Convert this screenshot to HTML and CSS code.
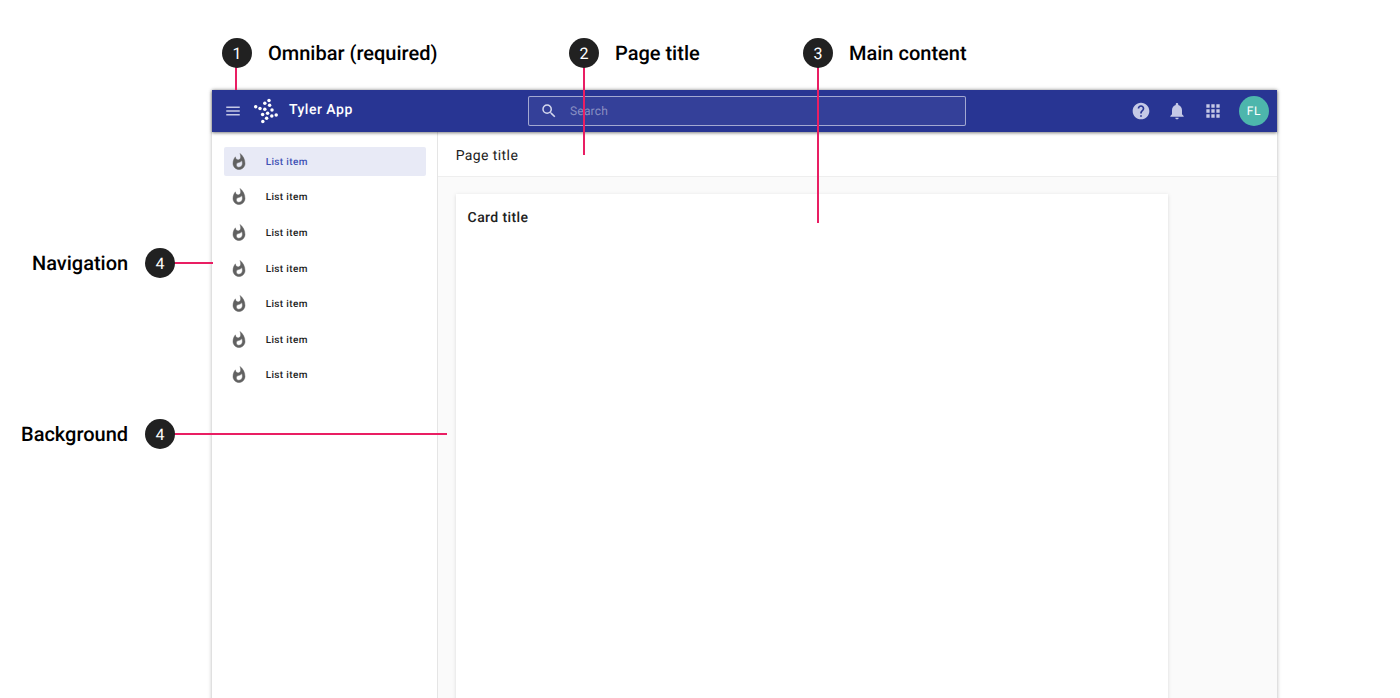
FILE: index.html
```html
<!DOCTYPE html>
<html lang="en">
<head>
<meta charset="utf-8">
<title>Tyler App layout</title>
<link rel="stylesheet" href="styles.css">
</head>
<body>
<div class="canvas">
  <div class="app">
    <header class="omnibar">
      <svg class="menu" viewBox="0 0 24 24" width="24" height="24"><path d="M3 18h18v-2H3v2zm0-5h18v-2H3v2zm0-7v2h18V6H3z"/></svg>
      <svg class="logo" viewBox="0 0 26 26" width="26" height="26">
        <g fill="#fff">
          <circle cx="16" cy="2.4" r="1.75"/><circle cx="11.8" cy="5.2" r="1.75"/><circle cx="16.6" cy="7.2" r="1.75"/><circle cx="2.7" cy="8.8" r="1.75"/><circle cx="7" cy="10.4" r="1.75"/><circle cx="11.8" cy="11.2" r="1.75"/><circle cx="19" cy="12" r="1.75"/><circle cx="14.6" cy="15.2" r="1.75"/><circle cx="9.6" cy="16.4" r="1.75"/><circle cx="23.2" cy="17" r="1.75"/><circle cx="18.8" cy="18" r="1.75"/><circle cx="13.6" cy="20.2" r="1.75"/><circle cx="9.8" cy="23.6" r="1.75"/>
        </g>
      </svg>
      <span class="app-name">Tyler App</span>
      <div class="search">
        <svg viewBox="0 0 24 24" width="18" height="18"><path d="M15.5 14h-.79l-.28-.27A6.47 6.47 0 0 0 16 9.5 6.5 6.5 0 1 0 9.5 16c1.61 0 3.09-.59 4.23-1.57l.27.28v.79l5 4.99L20.49 19l-4.99-5zm-6 0C7.01 14 5 11.99 5 9.5S7.01 5 9.5 5 14 7.01 14 9.5 11.99 14 9.5 14z"/></svg>
        <span>Search</span>
      </div>
      <div class="actions">
        <svg viewBox="0 0 24 24" width="20" height="20"><path d="M12 2C6.48 2 2 6.48 2 12s4.48 10 10 10 10-4.48 10-10S17.52 2 12 2zm1 17h-2v-2h2v2zm2.07-7.75l-.9.92C13.45 12.9 13 13.5 13 15h-2v-.5c0-1.1.45-2.1 1.17-2.83l1.24-1.26c.37-.36.59-.86.59-1.41 0-1.1-.9-2-2-2s-2 .9-2 2H8c0-2.21 1.79-4 4-4s4 1.79 4 4c0 .88-.36 1.68-.93 2.25z"/></svg>
        <svg viewBox="0 0 24 24" width="20" height="20"><path d="M12 22c1.1 0 2-.9 2-2h-4c0 1.1.89 2 2 2zm6-6v-5c0-3.07-1.64-5.64-4.5-6.32V4c0-.83-.67-1.5-1.5-1.5s-1.5.67-1.5 1.5v.68C7.63 5.36 6 7.92 6 11v5l-2 2v1h16v-1l-2-2z"/></svg>
        <svg viewBox="0 0 24 24" width="20" height="20"><path d="M4 8h4V4H4v4zm6 12h4v-4h-4v4zm-6 0h4v-4H4v4zm0-6h4v-4H4v4zm6 0h4v-4h-4v4zm6-10v4h4V4h-4zm-6 4h4V4h-4v4zm6 6h4v-4h-4v4zm0 6h4v-4h-4v4z"/></svg>
        <div class="avatar">FL</div>
      </div>
    </header>
    <div class="body">
      <nav class="nav">
        <a class="item active"><svg viewBox="0 0 24 24" width="18" height="18"><path d="M13.5.67s.74 2.65.74 4.8c0 2.06-1.35 3.73-3.41 3.73-2.07 0-3.63-1.67-3.63-3.73l.03-.36C5.21 7.51 4 10.62 4 14c0 4.42 3.58 8 8 8s8-3.58 8-8C20 8.61 17.41 3.8 13.5.67zM11.71 19c-1.78 0-3.22-1.4-3.22-3.14 0-1.62 1.05-2.76 2.81-3.12 1.77-.36 3.6-1.21 4.62-2.58.39 1.29.59 2.65.59 4.04 0 2.65-2.15 4.8-4.8 4.8z"/></svg><span>List item</span></a>
        <a class="item"><svg viewBox="0 0 24 24" width="18" height="18"><path d="M13.5.67s.74 2.65.74 4.8c0 2.06-1.35 3.73-3.41 3.73-2.07 0-3.63-1.67-3.63-3.73l.03-.36C5.21 7.51 4 10.62 4 14c0 4.42 3.58 8 8 8s8-3.58 8-8C20 8.61 17.41 3.8 13.5.67zM11.71 19c-1.78 0-3.22-1.4-3.22-3.14 0-1.62 1.05-2.76 2.81-3.12 1.77-.36 3.6-1.21 4.62-2.58.39 1.29.59 2.65.59 4.04 0 2.65-2.15 4.8-4.8 4.8z"/></svg><span>List item</span></a>
        <a class="item"><svg viewBox="0 0 24 24" width="18" height="18"><path d="M13.5.67s.74 2.65.74 4.8c0 2.06-1.35 3.73-3.41 3.73-2.07 0-3.63-1.67-3.63-3.73l.03-.36C5.21 7.51 4 10.62 4 14c0 4.42 3.58 8 8 8s8-3.58 8-8C20 8.61 17.41 3.8 13.5.67zM11.71 19c-1.78 0-3.22-1.4-3.22-3.14 0-1.62 1.05-2.76 2.81-3.12 1.77-.36 3.6-1.21 4.62-2.58.39 1.29.59 2.65.59 4.04 0 2.65-2.15 4.8-4.8 4.8z"/></svg><span>List item</span></a>
        <a class="item"><svg viewBox="0 0 24 24" width="18" height="18"><path d="M13.5.67s.74 2.65.74 4.8c0 2.06-1.35 3.73-3.41 3.73-2.07 0-3.63-1.67-3.63-3.73l.03-.36C5.21 7.51 4 10.62 4 14c0 4.42 3.58 8 8 8s8-3.58 8-8C20 8.61 17.41 3.8 13.5.67zM11.71 19c-1.78 0-3.22-1.4-3.22-3.14 0-1.62 1.05-2.76 2.81-3.12 1.77-.36 3.6-1.21 4.62-2.58.39 1.29.59 2.65.59 4.04 0 2.65-2.15 4.8-4.8 4.8z"/></svg><span>List item</span></a>
        <a class="item"><svg viewBox="0 0 24 24" width="18" height="18"><path d="M13.5.67s.74 2.65.74 4.8c0 2.06-1.35 3.73-3.41 3.73-2.07 0-3.63-1.67-3.63-3.73l.03-.36C5.21 7.51 4 10.62 4 14c0 4.42 3.58 8 8 8s8-3.58 8-8C20 8.61 17.41 3.8 13.5.67zM11.71 19c-1.78 0-3.22-1.4-3.22-3.14 0-1.62 1.05-2.76 2.81-3.12 1.77-.36 3.6-1.21 4.62-2.58.39 1.29.59 2.65.59 4.04 0 2.65-2.15 4.8-4.8 4.8z"/></svg><span>List item</span></a>
        <a class="item"><svg viewBox="0 0 24 24" width="18" height="18"><path d="M13.5.67s.74 2.65.74 4.8c0 2.06-1.35 3.73-3.41 3.73-2.07 0-3.63-1.67-3.63-3.73l.03-.36C5.21 7.51 4 10.62 4 14c0 4.42 3.58 8 8 8s8-3.58 8-8C20 8.61 17.41 3.8 13.5.67zM11.71 19c-1.78 0-3.22-1.4-3.22-3.14 0-1.62 1.05-2.76 2.81-3.12 1.77-.36 3.6-1.21 4.62-2.58.39 1.29.59 2.65.59 4.04 0 2.65-2.15 4.8-4.8 4.8z"/></svg><span>List item</span></a>
        <a class="item"><svg viewBox="0 0 24 24" width="18" height="18"><path d="M13.5.67s.74 2.65.74 4.8c0 2.06-1.35 3.73-3.41 3.73-2.07 0-3.63-1.67-3.63-3.73l.03-.36C5.21 7.51 4 10.62 4 14c0 4.42 3.58 8 8 8s8-3.58 8-8C20 8.61 17.41 3.8 13.5.67zM11.71 19c-1.78 0-3.22-1.4-3.22-3.14 0-1.62 1.05-2.76 2.81-3.12 1.77-.36 3.6-1.21 4.62-2.58.39 1.29.59 2.65.59 4.04 0 2.65-2.15 4.8-4.8 4.8z"/></svg><span>List item</span></a>
      </nav>
      <main class="main">
        <div class="page-title">Page title</div>
        <div class="content">
          <section class="card"><h2>Card title</h2></section>
        </div>
      </main>
    </div>
  </div>

  <div class="line l1"></div>
  <div class="line l2"></div>
  <div class="line l3"></div>
  <div class="line l4"></div>
  <div class="line l5"></div>

  <div class="badge b1">1</div><div class="label t1">Omnibar (required)</div>
  <div class="badge b2">2</div><div class="label t2">Page title</div>
  <div class="badge b3">3</div><div class="label t3">Main content</div>
  <div class="badge b4">4</div><div class="label t4">Navigation</div>
  <div class="badge b5">4</div><div class="label t5">Background</div>
</div>
</body>
</html>
```
FILE: styles.css
```css
* { box-sizing: border-box; }
html, body { margin: 0; height: 100%; overflow: hidden; background: #fff; }
body { font-family: Roboto, "Liberation Sans", sans-serif; color: #212121; text-rendering: geometricPrecision; }
.canvas { position: relative; width: 1400px; height: 698px; overflow: hidden; }

.app {
  position: absolute; left: 212px; top: 90px; width: 1065px; height: 640px;
  display: flex; flex-direction: column; background: #fafafa;
  box-shadow: 0 0 4px rgba(0,0,0,.3);
}
.omnibar {
  height: 42px; flex: none; display: flex; align-items: center; background: #283593;
  padding: 0 8px 0 12px; position: relative; z-index: 2;
  box-shadow: 0 1px 3px rgba(0,0,0,.5);
}
.menu { width: 18px; height: 18px; fill: #c5c9e6; flex: none; }
.logo { margin-left: 11px; flex: none; }
.app-name { margin-left: 10px; width: 239px; font-size: 14px; font-weight: 500; color: #fff; letter-spacing: .5px; position: relative; top: -1px; }
.search {
  width: 437.5px; height: 30px; display: flex; align-items: center; gap: 12px; padding-left: 11px;
  background: rgba(255,255,255,.06); border: 1px solid rgba(255,255,255,.55); border-radius: 2px;
  font-size: 12px; letter-spacing: .2px; color: rgba(255,255,255,.42);
}
.search svg { width: 18px; height: 18px; fill: #d5d8ee; flex: none; }
.actions { margin-left: auto; display: flex; align-items: center; }
.actions svg { width: 20px; height: 20px; fill: #c5c9e6; margin-right: 16px; flex: none; }
.avatar {
  width: 30px; height: 30px; border-radius: 50%; background: #4db6ac; color: #fff;
  display: flex; align-items: center; justify-content: center; font-size: 12px; letter-spacing: .8px;
}

.body { flex: 1; display: flex; min-height: 0; }
.nav { width: 226px; flex: none; background: #fff; border-right: 1px solid #e5e5e5; padding: 14.7px 11px 0 12px; }
.item {
  height: 29.4px; margin-bottom: 6.2px; display: flex; align-items: center; padding-left: 6px;
  border-radius: 2px; font-size: 10px; font-weight: 500; letter-spacing: .35px; color: #212121;
}
.item svg { width: 18px; height: 18px; fill: #616161; stroke: #616161; stroke-width: .6; flex: none; position: relative; top: .5px; }
.item span { margin-left: 17.7px; position: relative; top: 1px; }
.item.active { background: #e8eaf6; color: #3f51b5; }

.main { flex: 1; display: flex; flex-direction: column; min-width: 0; }
.page-title {
  height: 45px; flex: none; background: #fff; border-bottom: 1px solid #eeeeee; padding: 3px 17.7px 0;
  display: flex; align-items: center; font-size: 14px; letter-spacing: .4px; color: #212121;
}
.content { flex: 1; padding: 17px 109px 0 18px; }
.card { height: 100%; background: #fff; box-shadow: 0 1px 4px rgba(0,0,0,.13); padding: 15px 11.6px; }
.card h2 { margin: 0; font-size: 14px; line-height: 18px; font-weight: 500; letter-spacing: .4px; color: #212121; }

.line { position: absolute; background: #e91e63; z-index: 3; }
.l1 { left: 235px; top: 60px; width: 2px; height: 30px; }
.l2 { left: 583px; top: 60px; width: 2px; height: 95px; }
.l3 { left: 817px; top: 60px; width: 2px; height: 163px; }
.l4 { left: 170px; top: 262px; width: 43px; height: 2px; }
.l5 { left: 170px; top: 433px; width: 277px; height: 2px; }

.badge {
  position: absolute; width: 30px; height: 30px; border-radius: 50%; background: #212121; color: #fff; z-index: 4;
  display: flex; align-items: center; justify-content: center; font-size: 16px;
}
.b1 { left: 222px; top: 38px; }
.b2 { left: 569px; top: 38px; }
.b3 { left: 803px; top: 38px; }
.b4 { left: 145px; top: 248px; }
.b5 { left: 145px; top: 419px; }

.label { position: absolute; font-size: 20px; line-height: 24px; font-weight: 500; color: #000; white-space: nowrap; }
.t1 { left: 268px; top: 41px; }
.t2 { left: 615px; top: 41px; }
.t3 { left: 849px; top: 41px; }
.t4 { left: 32px; top: 251px; }
.t5 { left: 21px; top: 422px; }
```
